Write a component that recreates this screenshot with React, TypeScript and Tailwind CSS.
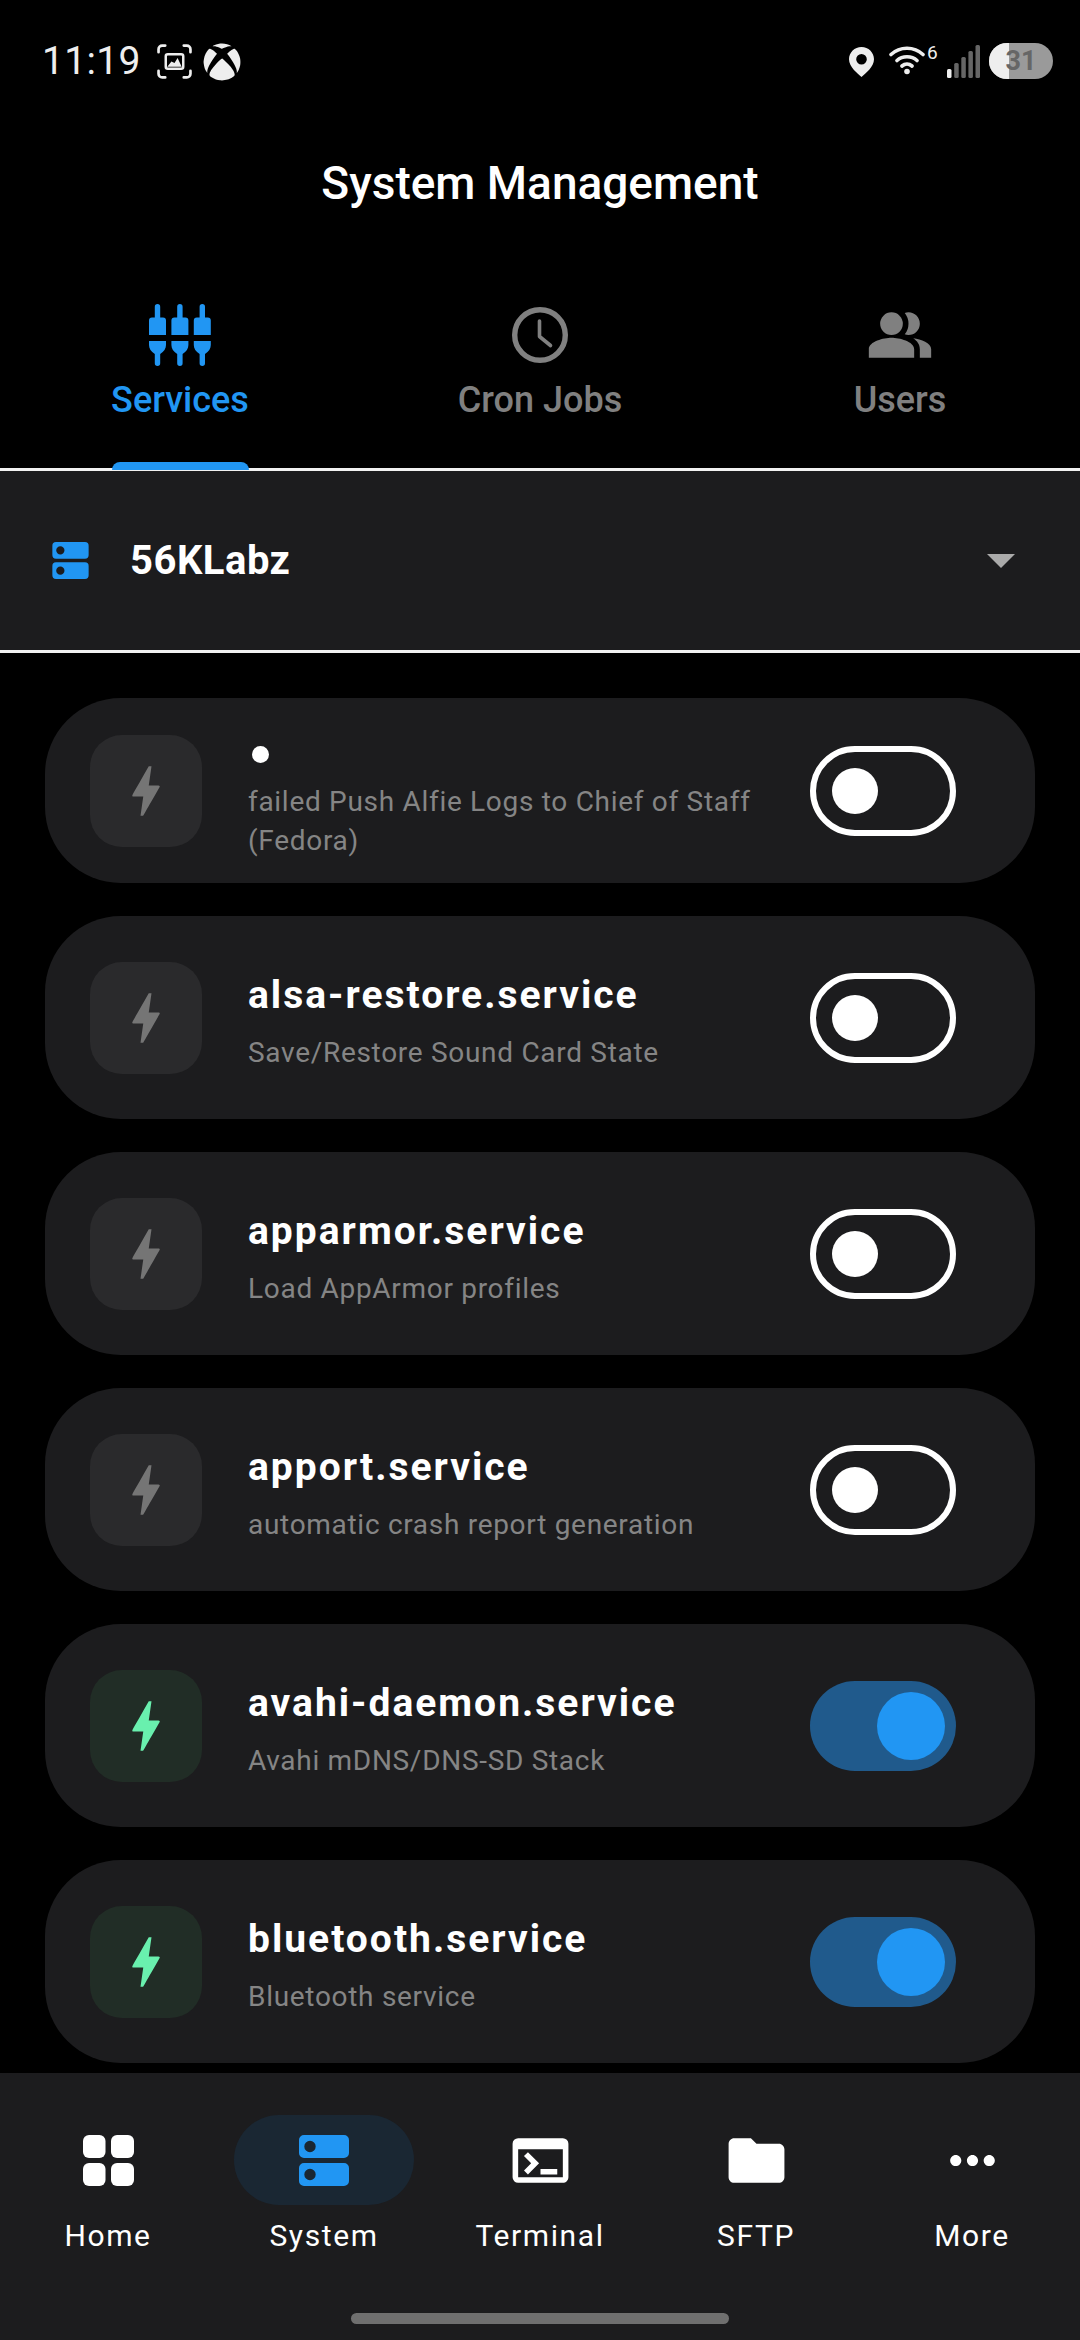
import { MdBolt, MdFolder, MdMoreHoriz, MdPeopleAlt, MdTerminal } from "react-icons/md";
import { FaXbox } from "react-icons/fa";

function ServerIcon({ className }: { className: string }) {
  return (
    <svg viewBox="0 0 50 51" className={className} fill="currentColor" fillRule="evenodd">
      <path d="M5 0h40a5 5 0 0 1 5 5v13a5 5 0 0 1-5 5H5a5 5 0 0 1-5-5V5a5 5 0 0 1 5-5zm6 5.8a5.7 5.7 0 1 0 0 11.4a5.7 5.7 0 0 0 0-11.4z" />
      <path d="M5 28h40a5 5 0 0 1 5 5v13a5 5 0 0 1-5 5H5a5 5 0 0 1-5-5V33a5 5 0 0 1 5-5zm6 5.8a5.7 5.7 0 1 0 0 11.4a5.7 5.7 0 0 0 0-11.4z" />
    </svg>
  );
}

function GridIcon() {
  return (
    <svg viewBox="0 0 51 51" className="w-[51px] h-[51px]" fill="currentColor">
      <rect x="0" y="0" width="22.5" height="23" rx="6" />
      <rect x="28" y="0" width="23" height="23" rx="6" />
      <rect x="0" y="28" width="22.5" height="23" rx="6" />
      <rect x="28" y="28" width="23" height="23" rx="6" />
    </svg>
  );
}

function PlugsIcon() {
  return (
    <svg viewBox="0 0 62 62" className="w-[62px] h-[62px]" fill="currentColor">
      {[0, 22.4, 44.8].map((x) => (
        <g key={x} transform={`translate(${x} 0)`}>
          <path d="M8.5 0a2.7 2.7 0 0 1 2.7 2.7V13.5H14a3 3 0 0 1 3 3V31H0V16.5a3 3 0 0 1 3-3h2.8V2.7A2.7 2.7 0 0 1 8.5 0z" />
          <path d="M0 37h17v4c0 3.5-2 6.5-5.8 9V59.3a2.7 2.7 0 0 1-5.4 0V50C2 47.5 0 44.5 0 41z" />
        </g>
      ))}
    </svg>
  );
}

function ClockIcon() {
  return (
    <svg viewBox="0 0 56 56" className="w-[56px] h-[56px]" fill="none" stroke="currentColor">
      <circle cx="28" cy="28" r="25.3" strokeWidth="5.4" />
      <path d="M27.5 14v15.5l11 9" strokeWidth="3.6" strokeLinecap="round" strokeLinejoin="round" />
    </svg>
  );
}

function StatusBar() {
  return (
    <div className="h-[122px] shrink-0 flex items-start pt-[43px] pl-[42px] pr-[27px] text-[#eeeeee]">
      <span className="text-[39px] leading-[36px] tracking-[0.3px] w-[115px]">11:19</span>
      <svg viewBox="0 0 34 34" className="w-[35px] h-[35px] mt-px" fill="none" stroke="currentColor" strokeWidth="2.6" strokeLinecap="round">
        <path d="M1.5 8V5a3.5 3.5 0 0 1 3.5-3.5h3M26 1.5h3A3.5 3.5 0 0 1 32.5 5v3M32.5 26v3a3.5 3.5 0 0 1-3.5 3.5h-3M8 32.5H5A3.5 3.5 0 0 1 1.5 29v-3" />
        <rect x="8.5" y="10" width="17" height="14" rx="2" strokeWidth="2.4" />
        <path d="M10 22l4-5 3 1.500 3-5 4 8.500z" fill="currentColor" stroke="none" />
      </svg>
      <FaXbox className="w-[38px] h-[38px] ml-[11px]" />
      <div className="flex-1" />
      <svg viewBox="0 0 25 30" className="w-[25px] h-[30px] mt-[4px]" fill="currentColor" fillRule="evenodd">
        <path d="M12.5 0C5.600 0 0 5.500 0 12.300 0 20 8.500 26.500 12.500 30 16.500 26.500 25 20 25 12.300 25 5.500 19.400 0 12.500 0zm0 7a5.300 5.300 0 1 1 0 10.600a5.300 5.300 0 0 1 0-10.600z" />
      </svg>
      <svg viewBox="0 0 36 30" className="w-[36px] h-[30px] ml-[15px] mt-[2px]" fill="none" stroke="currentColor" strokeWidth="3.6" strokeLinecap="round">
        <path d="M2 9.500C11 1.200 25 1.200 34 9.500M8 15.500C13.500 10.500 22.500 10.500 28 15.500M13 21C16 18.500 20 18.500 23 21" />
        <circle cx="18" cy="26.500" r="2.800" fill="currentColor" stroke="none" />
      </svg>
      <span className="text-[19px] leading-[16px] ml-[2px] mt-[2px] w-[11px]">6</span>
      <svg viewBox="0 0 33 33" className="w-[33px] h-[33px] ml-[9px] mt-[2px]" fill="#666666">
        <rect x="0" y="24" width="4.500" height="9" rx="1.500" fill="#eeeeee" />
        <rect x="7.200" y="18" width="4.500" height="15" rx="1.500" />
        <rect x="14.300" y="12" width="4.500" height="21" rx="1.500" />
        <rect x="21.400" y="6" width="4.500" height="27" rx="1.500" />
        <rect x="28.500" y="0" width="4.500" height="33" rx="1.500" />
      </svg>
      <div className="relative w-[64px] h-[36px] ml-[9px] rounded-full overflow-hidden bg-[#9a9a9a] flex items-center justify-center">
        <div className="absolute left-0 top-0 bottom-0 w-[20px] bg-[#eeeeee]" />
        <span className="relative text-[27px] leading-none font-bold text-[#666666]">31</span>
      </div>
    </div>
  );
}

function Tab({ label, active, icon }: { label: string; active?: boolean; icon: React.ReactNode }) {
  return (
    <div className={`relative flex-1 flex flex-col items-center ${active ? "text-[#2196f3]" : "text-[#808080]"}`}>
      <div className="h-[68px] flex items-center justify-center">{icon}</div>
      <span className="mt-[11px] text-[36px] leading-[40px] font-medium">{label}</span>
      {active && <div className="absolute z-10 left-[112px] -bottom-[2px] w-[137px] h-[8px] rounded-t-[8px] bg-[#2196f3]" />}
    </div>
  );
}

function Toggle({ on }: { on: boolean }) {
  if (on) {
    return (
      <div className="w-[146px] h-[90px] rounded-full bg-[#205a8c] flex items-center justify-end pr-[11px]">
        <div className="w-[68px] h-[68px] rounded-full bg-[#2196f3]" />
      </div>
    );
  }
  return (
    <div className="w-[146px] h-[90px] rounded-full border-[6px] border-white flex items-center pl-[16px]">
      <div className="w-[46px] h-[46px] rounded-full bg-white" />
    </div>
  );
}

function ServiceCard({ service }: { service: (typeof services)[number] }) {
  return (
    <div className={`shrink-0 rounded-[76px] bg-[#1c1c1e] flex items-center pl-[45px] pr-[79px] ${service.first ? "h-[185px]" : "h-[203px]"}`}>
      <div className={`w-[112px] h-[112px] shrink-0 rounded-[32px] flex items-center justify-center ${service.on ? "bg-[#212d26]" : "bg-[#2a2a2c]"}`}>
        <MdBolt className={`w-[66px] h-[66px] ${service.on ? "text-[#69f0ae]" : "text-[#757575]"}`} />
      </div>
      <div className="flex-1 min-w-0 ml-[46px]">
        {service.first ? (
          <div className="w-[17px] h-[17px] rounded-full bg-white ml-[4px] mt-[24px] mb-[19px]" />
        ) : (
          <div className="text-[39px] leading-[44px] font-bold tracking-[2px] text-white mt-[10px] mb-[16px]">{service.name}</div>
        )}
        <div className="text-[28px] leading-[39px] tracking-[0.7px] text-[#858585] pr-[40px]">{service.description}</div>
      </div>
      <Toggle on={service.on} />
    </div>
  );
}

function NavItem({ label, active, icon }: { label: string; active?: boolean; icon: React.ReactNode }) {
  return (
    <div className="flex-1 flex flex-col items-center">
      <div className={`w-[180px] h-[90px] rounded-full flex items-center justify-center ${active ? "bg-[#1a2733] text-[#2196f3]" : "text-white"}`}>
        {icon}
      </div>
      <span className="mt-[11px] text-[30px] leading-[40px] tracking-[1.6px] text-white">{label}</span>
    </div>
  );
}

export default function App() {
  return (
    <div className="w-[1080px] h-[2340px] bg-black text-white flex flex-col overflow-hidden font-['Roboto',sans-serif]">
      <StatusBar />

      <div className="h-[122px] shrink-0 flex items-center justify-center">
        <h1 className="text-[46px] leading-none font-medium">System Management</h1>
      </div>

      {/* Tabs */}
      <div className="h-[224px] shrink-0 flex pt-[57px]">
        <Tab label="Services" active icon={<PlugsIcon />} />
        <Tab label="Cron Jobs" icon={<ClockIcon />} />
        <Tab label="Users" icon={<MdPeopleAlt className="w-[68px] h-[68px]" />} />
      </div>

      {/* Server picker */}
      <div className="h-[185px] shrink-0 border-y-[3px] border-[#f2f2f2] bg-[#1c1c1e] flex items-center pl-[52px] pr-[65px]">
        <ServerIcon className="w-[37px] h-[37px] text-[#2196f3]" />
        <span className="ml-[41px] text-[40px] font-bold tracking-[0.5px]">56KLabz</span>
        <div className="ml-auto w-0 h-0 border-x-[14px] border-x-transparent border-t-[14px] border-t-[#aaaaaa]" />
      </div>

      {/* Service list */}
      <div className="flex-1 min-h-0 overflow-hidden px-[45px] pt-[45px] flex flex-col gap-[33px]">
        {services.map((service) => (
          <ServiceCard key={service.description} service={service} />
        ))}
      </div>

      {/* Bottom nav */}
      <div className="h-[267px] shrink-0 bg-[#1c1c1e] flex flex-col">
        <div className="flex pt-[42px]">
          <NavItem label="Home" icon={<GridIcon />} />
          <NavItem label="System" active icon={<ServerIcon className="w-[50px] h-[51px]" />} />
          <NavItem label="Terminal" icon={<MdTerminal className="w-[67px] h-[67px]" />} />
          <NavItem label="SFTP" icon={<MdFolder className="w-[67px] h-[67px]" />} />
          <NavItem label="More" icon={<MdMoreHoriz className="w-[67px] h-[67px]" />} />
        </div>
        <div className="mt-[57px] mx-auto w-[378px] h-[11px] rounded-full bg-[#6f6f6f]" />
      </div>
    </div>
  );
}

const services = [
  { name: "", description: "failed Push Alfie Logs to Chief of Staff (Fedora)", on: false, first: true },
  { name: "alsa-restore.service", description: "Save/Restore Sound Card State", on: false },
  { name: "apparmor.service", description: "Load AppArmor profiles", on: false },
  { name: "apport.service", description: "automatic crash report generation", on: false },
  { name: "avahi-daemon.service", description: "Avahi mDNS/DNS-SD Stack", on: true },
  { name: "bluetooth.service", description: "Bluetooth service", on: true },
];
